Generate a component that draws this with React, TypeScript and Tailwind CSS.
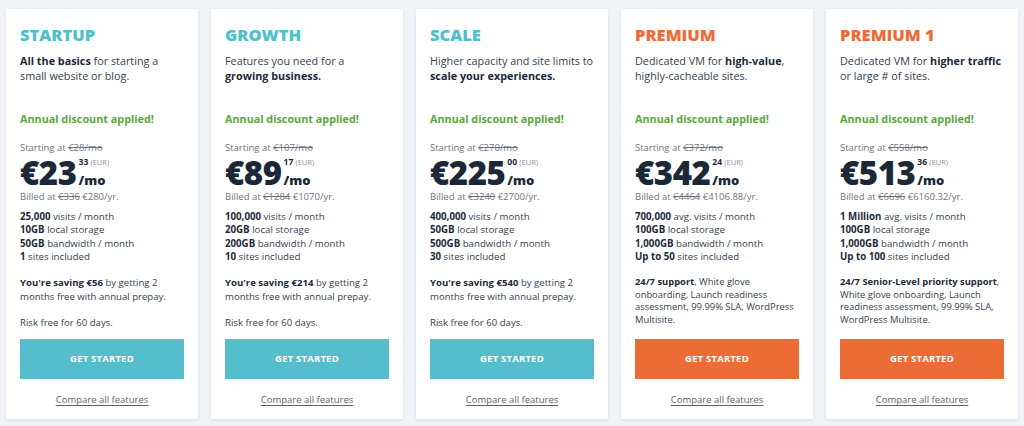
import React from "react"

type Plan = {
  name: string
  accent: "teal" | "orange"
  desc: React.ReactNode
  oldMonthly: string
  price: string
  cents: string
  oldYear: string
  newYear: string
  features: [string, string][]
  saving?: string
  support?: React.ReactNode
}

const plans: Plan[] = [
  {
    name: "STARTUP",
    accent: "teal",
    desc: <><b className="font-bold text-[#1d2a39]">All the basics</b> for starting a small website or blog.</>,
    oldMonthly: "€28/mo",
    price: "€23",
    cents: "33",
    oldYear: "€336",
    newYear: "€280/yr.",
    features: [["25,000", " visits / month"], ["10GB", " local storage"], ["50GB", " bandwidth / month"], ["1", " sites included"]],
    saving: "€56",
  },
  {
    name: "GROWTH",
    accent: "teal",
    desc: <>Features you need for a <b className="font-bold text-[#1d2a39]">growing business.</b></>,
    oldMonthly: "€107/mo",
    price: "€89",
    cents: "17",
    oldYear: "€1284",
    newYear: "€1070/yr.",
    features: [["100,000", " visits / month"], ["20GB", " local storage"], ["200GB", " bandwidth / month"], ["10", " sites included"]],
    saving: "€214",
  },
  {
    name: "SCALE",
    accent: "teal",
    desc: <>Higher capacity and site limits to <b className="font-bold text-[#1d2a39]">scale your experiences.</b></>,
    oldMonthly: "€270/mo",
    price: "€225",
    cents: "00",
    oldYear: "€3240",
    newYear: "€2700/yr.",
    features: [["400,000", " visits / month"], ["50GB", " local storage"], ["500GB", " bandwidth / month"], ["30", " sites included"]],
    saving: "€540",
  },
  {
    name: "PREMIUM",
    accent: "orange",
    desc: <>Dedicated VM for <b className="font-bold text-[#1d2a39]">high-value</b>, highly-cacheable sites.</>,
    oldMonthly: "€372/mo",
    price: "€342",
    cents: "24",
    oldYear: "€4464",
    newYear: "€4106.88/yr.",
    features: [["700,000", " avg. visits / month"], ["100GB", " local storage"], ["1,000GB", " bandwidth / month"], ["Up to 50", " sites included"]],
    support: <><b className="font-bold text-[#1d2a39]">24/7 support</b>, White glove onboarding, Launch readiness assessment, 99.99% SLA, WordPress Multisite.</>,
  },
  {
    name: "PREMIUM 1",
    accent: "orange",
    desc: <>Dedicated VM for <b className="font-bold text-[#1d2a39]">higher traffic</b> or large # of sites.</>,
    oldMonthly: "€558/mo",
    price: "€513",
    cents: "36",
    oldYear: "€6696",
    newYear: "€6160.32/yr.",
    features: [["1 Million", " avg. visits / month"], ["100GB", " local storage"], ["1,000GB", " bandwidth / month"], ["Up to 100", " sites included"]],
    support: <><b className="font-bold text-[#1d2a39]">24/7 Senior-Level priority support</b>, White glove onboarding, Launch readiness assessment, 99.99% SLA, WordPress Multisite.</>,
  },
]

function PlanCard({ plan }: { plan: Plan }) {
  const teal = plan.accent === "teal"
  return (
    <div className="w-[192px] h-[410px] bg-white shadow-[0_1px_3px_rgba(30,45,60,0.12)] flex flex-col px-[14px] pt-[16px] pb-[13px]">
      {/* titulo + descricao */}
      <h2 className={`text-[16.5px] leading-[20px] font-extrabold ${teal ? "text-[#4fbfcd]" : "text-[#ec6b37]"}`}>
        {plan.name}
      </h2>
      <p className="mt-[8px] h-[58px] text-[10.8px] leading-[15px] text-[#36414c]">{plan.desc}</p>

      <p className="text-[10.8px] leading-[15px] font-bold text-[#5aa83c]">Annual discount applied!</p>

      {/* preco */}
      <p className="mt-[16px] text-[9.5px] leading-[12px] text-[#6c7580]">
        Starting at <span className="line-through">{plan.oldMonthly}</span>
      </p>
      <div className="mt-[2px] flex h-[33px] text-[#1b2838]">
        <span className="text-[33px] leading-[33px] font-extrabold tracking-[-0.5px]">{plan.price}</span>
        <div className="ml-[2px] flex flex-col justify-between pt-[1px] pb-[2px]">
          <div className="text-[8.5px] leading-[10px] whitespace-nowrap">
            <span className="font-bold">{plan.cents}</span>{" "}
            <span className="text-[#8a929b] text-[7.5px]">(EUR)</span>
          </div>
          <div className="text-[13px] leading-[13px] font-extrabold">/mo</div>
        </div>
      </div>
      <p className="mt-[2px] text-[9.5px] leading-[12px] text-[#6c7580]">
        Billed at <span className="line-through">{plan.oldYear}</span> {plan.newYear}
      </p>

      {/* recursos */}
      <ul className="mt-[7px] text-[9.7px] leading-[13.3px] text-[#36414c]">
        {plan.features.map(([b, rest]) => (
          <li key={b + rest}>
            <b className="font-bold text-[#1d2a39]">{b}</b>
            {rest}
          </li>
        ))}
      </ul>

      {plan.saving ? (
        <>
          <p className="mt-[13px] text-[9.6px] leading-[14px] text-[#36414c]">
            <b className="font-bold text-[#1d2a39]">You're saving {plan.saving}</b> by getting 2 months free with annual prepay.
          </p>
          <p className="mt-[12px] text-[9.6px] leading-[14px] text-[#36414c]">Risk free for 60 days.</p>
        </>
      ) : (
        <p className="mt-[13px] text-[9.4px] leading-[12.5px] text-[#36414c]">{plan.support}</p>
      )}

      <button
        className={`mt-auto h-[40px] w-full text-white text-[9.5px] font-bold tracking-[0.2px] ${
          teal ? "bg-[#55bdcb]" : "bg-[#ec6c36]"
        }`}
      >
        GET STARTED
      </button>
      <a className="mt-[15px] text-center text-[9.5px] leading-[12px] text-[#5b636c] underline underline-offset-2">
        Compare all features
      </a>
    </div>
  )
}

export default function App() {
  return (
    <div className="w-[1024px] h-[426px] bg-[#f1f4f7] pt-[9px] px-[6px] font-['Open_Sans',sans-serif]">
      <div className="flex gap-[13px]">
        {plans.map(p => (
          <PlanCard key={p.name} plan={p} />
        ))}
      </div>
    </div>
  )
}
